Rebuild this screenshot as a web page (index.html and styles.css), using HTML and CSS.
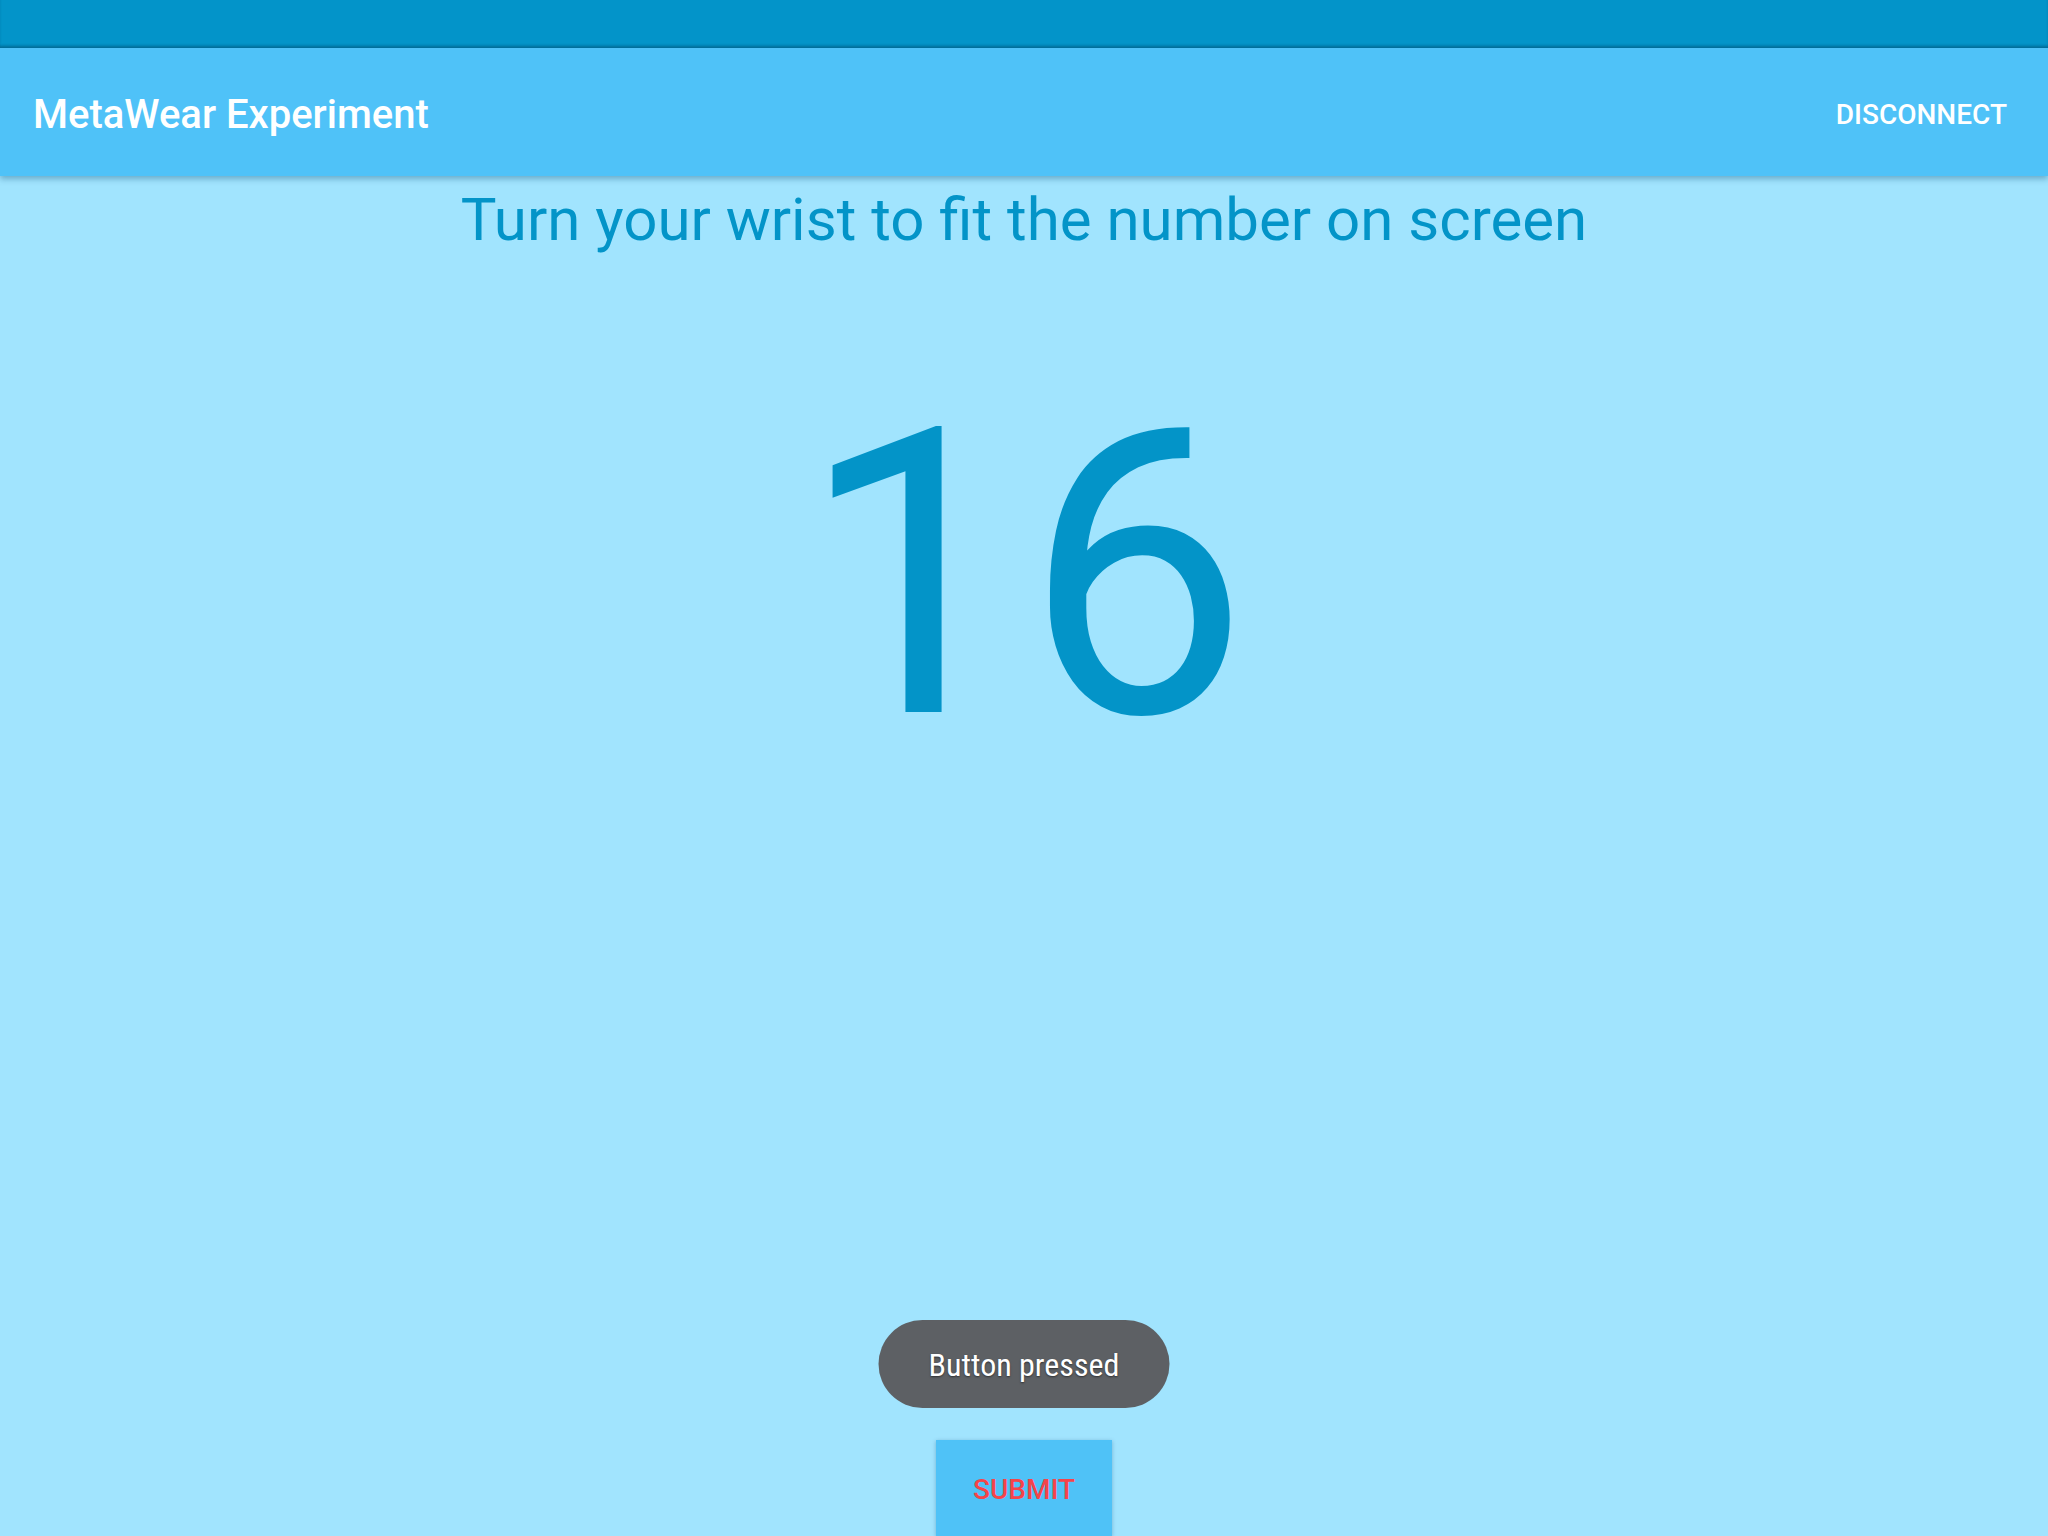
FILE: index.html
```html
<!DOCTYPE html>
<html lang="en">
<head>
<meta charset="utf-8">
<title>MetaWear Experiment</title>
<link rel="stylesheet" href="styles.css">
</head>
<body>
<div class="screen">
  <div class="status-bar"></div>
  <header class="app-bar">
    <h1 class="app-title">MetaWear Experiment</h1>
    <span class="app-action">DISCONNECT</span>
  </header>
  <main class="content">
    <p class="prompt">Turn your wrist to fit the number on screen</p>
    <div class="target-number">16</div>
    <button class="submit-btn" type="button">SUBMIT</button>
  </main>
  <div class="toast">Button pressed</div>
</div>
</body>
</html>
```
FILE: styles.css
```css
html, body {
  margin: 0;
  padding: 0;
}
body {
  width: 2048px;
  height: 1536px;
  overflow: hidden;
  background: #a1e4fe;
  font-family: Roboto, "Noto Sans", sans-serif;
}
.screen {
  position: relative;
  display: flex;
  flex-direction: column;
  width: 2048px;
  height: 1536px;
}
.status-bar {
  height: 48px;
  flex: none;
  background: #0394c9;
  box-shadow: inset 0 -3px 3px -1px rgba(0, 60, 90, 0.45);
}
.app-bar {
  flex: none;
  height: 128px;
  box-sizing: border-box;
  padding: 0 41px 0 33px;
  display: flex;
  align-items: center;
  justify-content: space-between;
  background: #4fc2f8;
  box-shadow: 0 3px 6px rgba(0, 70, 110, 0.35);
  position: relative;
  z-index: 1;
  color: #ffffff;
}
.app-title {
  margin: 0;
  font-size: 40px;
  font-weight: 500;
  line-height: 1;
  padding-top: 5px;
}
.app-action {
  font-size: 28px;
  font-weight: 500;
  line-height: 1;
  padding-top: 5px;
}
.content {
  flex: 1;
  display: flex;
  flex-direction: column;
  align-items: center;
}
.prompt {
  margin: 14px 0 0;
  font-size: 60px;
  line-height: 1;
  color: #0394c8;
  font-weight: 400;
}
.target-number {
  margin-top: 126px;
  font-size: 400px;
  line-height: 1;
  color: #0394c8;
}
.submit-btn {
  margin-top: auto;
  width: 176px;
  height: 96px;
  border: none;
  padding: 2px 0 0;
  background: #4fc2f7;
  color: #f5444a;
  font-family: Roboto, "Noto Sans", sans-serif;
  font-size: 28px;
  font-weight: 500;
  box-shadow: 0 1px 4px rgba(0, 60, 100, 0.3);
}
.toast {
  position: absolute;
  left: 50%;
  bottom: 128px;
  transform: translateX(-50%);
  width: 291px;
  height: 88px;
  box-sizing: border-box;
  padding-top: 2px;
  border-radius: 44px;
  background: #5d6064;
  color: #ffffff;
  display: flex;
  align-items: center;
  justify-content: center;
  font-size: 32px;
  font-stretch: 85%;
  text-shadow: 0 1px 2px rgba(0, 0, 0, 0.5);
}
```
